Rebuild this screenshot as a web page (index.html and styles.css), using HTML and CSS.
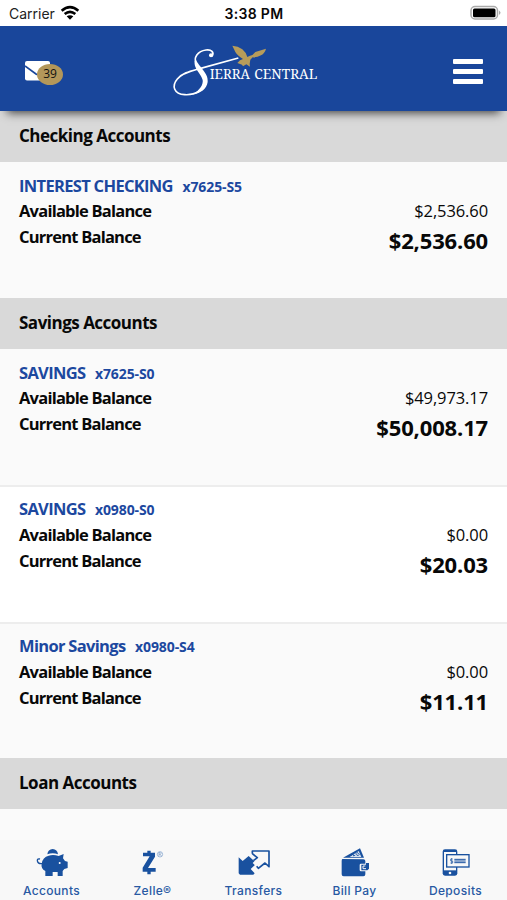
FILE: index.html
```html
<!DOCTYPE html>
<html lang="en">
<head>
    <meta charset="UTF-8">
    <meta name="viewport" content="width=device-width, initial-scale=1.0">
    <title>Sierra Central - Accounts</title>
    <link rel="stylesheet" href="styles.css">
</head>
<body>
    <div class="status-bar">
        <div class="carrier">
            <span>Carrier</span>
            <svg width="20" height="16" viewBox="0 0 60 48">
                <path d="M5 17Q30-4 55 17" fill="none" stroke="#000" stroke-width="8"/>
                <path d="M14 27Q30 14 46 27" fill="none" stroke="#000" stroke-width="8"/>
                <path d="M20 34Q30 27 40 34L30 44Z"/>
            </svg>
        </div>
        <div class="time">3:38 PM</div>
        <div class="battery">
            <svg width="31" height="16" viewBox="0 0 31 16">
                <rect x="1" y="1.5" width="26.5" height="12.5" rx="4" fill="#fff" stroke="#aaa" stroke-width="1.5"/>
                <rect x="3" y="3.5" width="22.5" height="8.8" rx="1.5"/>
                <path d="M29 5.5Q32 7.8 29 10Z" fill="#aaa"/>
            </svg>
        </div>
    </div>

    <header class="header">
        <button class="mail" aria-label="Messages">
            <svg width="25" height="20" viewBox="0 0 25 20">
                <rect width="25" height="19.5" rx="2" fill="#fff"/>
                <path d="M0 5L11 13Q12.500 14 14 13L20 9" fill="none" stroke="#19469b" stroke-width="1.6"/>
            </svg>
            <span class="mail-badge">39</span>
        </button>
        <svg class="logo" width="150" height="60" viewBox="30 30 450 180">
            <path d="M156 79C164 66 154 58 138 60C114 63 98 83 110 103C120 120 139 134 137 155C134 180 106 196 74 194C42 192 34 168 52 147C66 130 89 124 111 118Q165 103 235 84" fill="none" stroke="#fff" stroke-width="5"/>
            <path d="M107 85C110 106 147 128 143 156C140 177 122 190 98 193C120 180 130 164 128 150C124 130 94 112 107 85Z" fill="#fff"/>
            <circle cx="153" cy="76" r="6" fill="#fff"/>
            <path d="M217 47Q234 48 247 58Q258 67 262 81L270 77Q279 76 286 66L318 56Q315 69 303 76Q291 83 278 82L271 89L269 102L270 110L259 103L249 109L246 104L232 99L240 91L249 87Q232 77 226 66Z" fill="#b79c5a"/>
            <text x="149" y="147" textLength="121" lengthAdjust="spacingAndGlyphs">IERRA</text>
            <text x="283" y="147" textLength="189" lengthAdjust="spacingAndGlyphs">CENTRAL</text>
        </svg>
        <button class="menu" aria-label="Menu">
            <span></span>
            <span></span>
            <span></span>
        </button>
    </header>

    <main class="accounts">
        <h2>Checking Accounts</h2>
        <div class="account">
            <div class="account-name">INTEREST CHECKING <small>x7625-S5</small></div>
            <div class="balance"><b>Available Balance</b><span>$2,536.60</span></div>
            <div class="balance"><b>Current Balance</b><strong>$2,536.60</strong></div>
        </div>

        <h2>Savings Accounts</h2>
        <div class="account">
            <div class="account-name">SAVINGS <small>x7625-S0</small></div>
            <div class="balance"><b>Available Balance</b><span>$49,973.17</span></div>
            <div class="balance"><b>Current Balance</b><strong>$50,008.17</strong></div>
        </div>
        <div class="account white">
            <div class="account-name">SAVINGS <small>x0980-S0</small></div>
            <div class="balance"><b>Available Balance</b><span>$0.00</span></div>
            <div class="balance"><b>Current Balance</b><strong>$20.03</strong></div>
        </div>
        <div class="account">
            <div class="account-name">Minor Savings <small>x0980-S4</small></div>
            <div class="balance"><b>Available Balance</b><span>$0.00</span></div>
            <div class="balance"><b>Current Balance</b><strong>$11.11</strong></div>
        </div>

        <h2>Loan Accounts</h2>
    </main>

    <nav class="tabs">
        <a class="tab">
            <svg width="34" height="30" viewBox="104 56 102 90">
                <path d="M141 75Q143 60 157 59Q171 60 173 75Q157 69 141 75Z"/>
                <path d="M124 103Q127 83 145 79Q159 75 175 80L190 74L188 87L194 95L202 97V116L192 119L187 125V140H172V128H157V140H135V125Q121 117 124 103Z"/>
                <path d="M125 103Q112 104 111 94Q111 87 119 89" fill="none" stroke="#19519f" stroke-width="4"/>
                <circle cx="178" cy="101" r="3" fill="#fff"/>
            </svg>
            <span>Accounts</span>
        </a>
        <a class="tab">
            <svg width="34" height="30" viewBox="407 56 102 90">
                <path d="M441 64H451V70H464V82L443 116H466V127H451V135H441V127H427V115L448 81H428V70H441Z"/>
                <circle cx="479" cy="75" r="8" fill="none" stroke="#789bc9" stroke-width="2"/>
                <path d="M476 80V70H480Q484 73 480 75H476M480 75L483 80" fill="none" stroke="#789bc9" stroke-width="2"/>
            </svg>
            <span>Zelle®</span>
        </a>
        <a class="tab">
            <svg width="34" height="30" viewBox="109 56 102 90">
                <path d="M114 84L126 95L144 80L168 102L150 119L162 132L158 136H118L114 132Z"/>
                <path d="M155 65H205V112L192 99L173 117L156 101L172 85L155 68Z" fill="#f8f8f8"/>
                <path d="M155 73V65H205V112L193 101L173 117L168 111M155 73L170 85L158 94" fill="none" stroke="#19519f" stroke-width="5" stroke-linejoin="round"/>
            </svg>
            <span>Transfers</span>
        </a>
        <a class="tab">
            <svg width="34" height="30" viewBox="413 56 102 90">
                <path d="M428 85L479 57L491 85Z"/>
                <path d="M448 83L475 65L483 83Z" fill="#d8e2ef"/>
                <path d="M453 78L458 74L460 80L465 77M467 72L472 80L477 75L470 69Z" fill="none" stroke="#19519f" stroke-width="2.500"/>
                <path d="M426 89Q424 91 424 95V135Q424 141 430 141H489Q495 141 495 135V126H482Q478 126 478 122V107Q478 103 482 103H495V95Q495 90 489 90Z"/>
                <path d="M483 106H497V101H506V118L501 123H483Z"/>
                <path d="M495 110H488V118H497" fill="none" stroke="#f8f8f8" stroke-width="3"/>
            </svg>
            <span>Bill Pay</span>
        </a>
        <a class="tab">
            <svg width="34" height="30" viewBox="208 56 102 90">
                <rect x="219" y="60" width="44" height="79" rx="7"/>
                <path d="M223 68H259V123H223Z" fill="#f8f8f8"/>
                <rect x="231" y="76" width="67" height="37" fill="#f8f8f8" stroke="#19519f" stroke-width="4"/>
                <path d="M254 90H288M254 95H288M254 100H288" fill="none" stroke="#19519f" stroke-width="3"/>
                <path d="M249 89H243V95H249V101H242M246 86V104" fill="none" stroke="#19519f" stroke-width="2"/>
                <circle cx="241" cy="131" r="4" fill="#f8f8f8"/>
            </svg>
            <span>Deposits</span>
        </a>
    </nav>
</body>
</html>
```
FILE: styles.css
```css
* {
    box-sizing: border-box;
}
body {
    display: flex;
    flex-direction: column;
    height: 900px;
    margin: 0;
    overflow: hidden;
    background: #fafafa;
    color: #080808;
    font-family: "Open Sans", "Noto Sans", sans-serif;
}
button {
    padding: 0;
    border: none;
    background: none;
}
.status-bar {
    display: grid;
    grid-template-columns: 1fr auto 1fr;
    align-items: center;
    flex: none;
    height: 26px;
    padding: 0 6px 0 9px;
    background: #fff;
    font-family: Inter, sans-serif;
    font-size: 14px;
}
.carrier {
    display: flex;
    align-items: center;
    gap: 5px;
    color: #222;
}
.time {
    margin-right: 2px;
    font-weight: 600;
    letter-spacing: 0.3px;
}
.battery {
    display: flex;
    justify-content: flex-end;
}
.header {
    position: relative;
    z-index: 1;
    display: flex;
    align-items: center;
    flex: none;
    height: 85px;
    padding: 0 24px 0 25px;
    background: #19469b;
    box-shadow: 0 9px 9px -7px rgba(0, 0, 0, 0.7);
}
.mail {
    position: relative;
    width: 39px;
    height: 20px;
    margin-top: 4px;
    text-align: left;
}
.mail svg {
    display: block;
}
.mail-badge {
    position: absolute;
    top: 3px;
    left: 12px;
    width: 26px;
    height: 21px;
    border-radius: 50%;
    background: #b3975a;
    color: #111;
    font: 12px/20px "Open Sans", sans-serif;
    text-align: center;
}
.logo {
    margin-top: 3px;
    margin-left: 106px;
}
.logo text {
    fill: #fff;
    font-family: "Noto Serif", "Liberation Serif", serif;
    font-size: 43px;
}
.menu {
    display: flex;
    flex-direction: column;
    gap: 5px;
    width: 30px;
    margin-top: 5px;
    margin-left: auto;
}
.menu span {
    height: 5px;
    border-radius: 1px;
    background: #fff;
}
.accounts {
    flex: 1;
    min-height: 0;
}
h2 {
    height: 51px;
    margin: 0;
    padding-left: 19px;
    background: #d9d9d9;
    font-size: 17px;
    font-weight: 700;
    letter-spacing: -0.5px;
    line-height: 49px;
}
.account {
    height: 136px;
    padding: 13px 19px 0;
    background: #fafafa;
    font-size: 16.5px;
    line-height: 26px;
}
.account + .account {
    height: 137px;
    border-top: 2px solid #ededed;
    padding-top: 11px;
}
.account:last-of-type {
    height: 136px;
}
.account.white {
    background: #fff;
}
.account-name {
    color: #1c489f;
    font-weight: 700;
    letter-spacing: -0.68px;
    line-height: 22px;
}
.account-name small {
    margin-left: 6px;
    font-size: 14px;
    letter-spacing: -0.1px;
}
.balance {
    display: flex;
    justify-content: space-between;
    height: 26px;
}
.account + .account .account-name {
    margin-bottom: 1px;
}
.balance b {
    font-weight: 700;
    letter-spacing: -0.78px;
}
.balance span {
    letter-spacing: -0.1px;
}
.balance strong {
    padding-top: 3px;
    font-size: 22px;
    font-weight: 700;
    letter-spacing: -0.15px;
}
.tabs {
    display: flex;
    justify-content: space-between;
    flex: none;
    height: 60px;
    padding: 0 1px;
    background: #f8f8f8;
}
.tab {
    display: flex;
    flex-direction: column;
    align-items: center;
    width: 101px;
    padding-top: 8px;
    color: #2859a3;
    fill: #19519f;
    font-family: Inter, sans-serif;
    font-size: 12px;
    font-weight: 500;
    line-height: 15px;
    letter-spacing: 0.35px;
}
.tab span {
    margin-top: 5px;
}
```
